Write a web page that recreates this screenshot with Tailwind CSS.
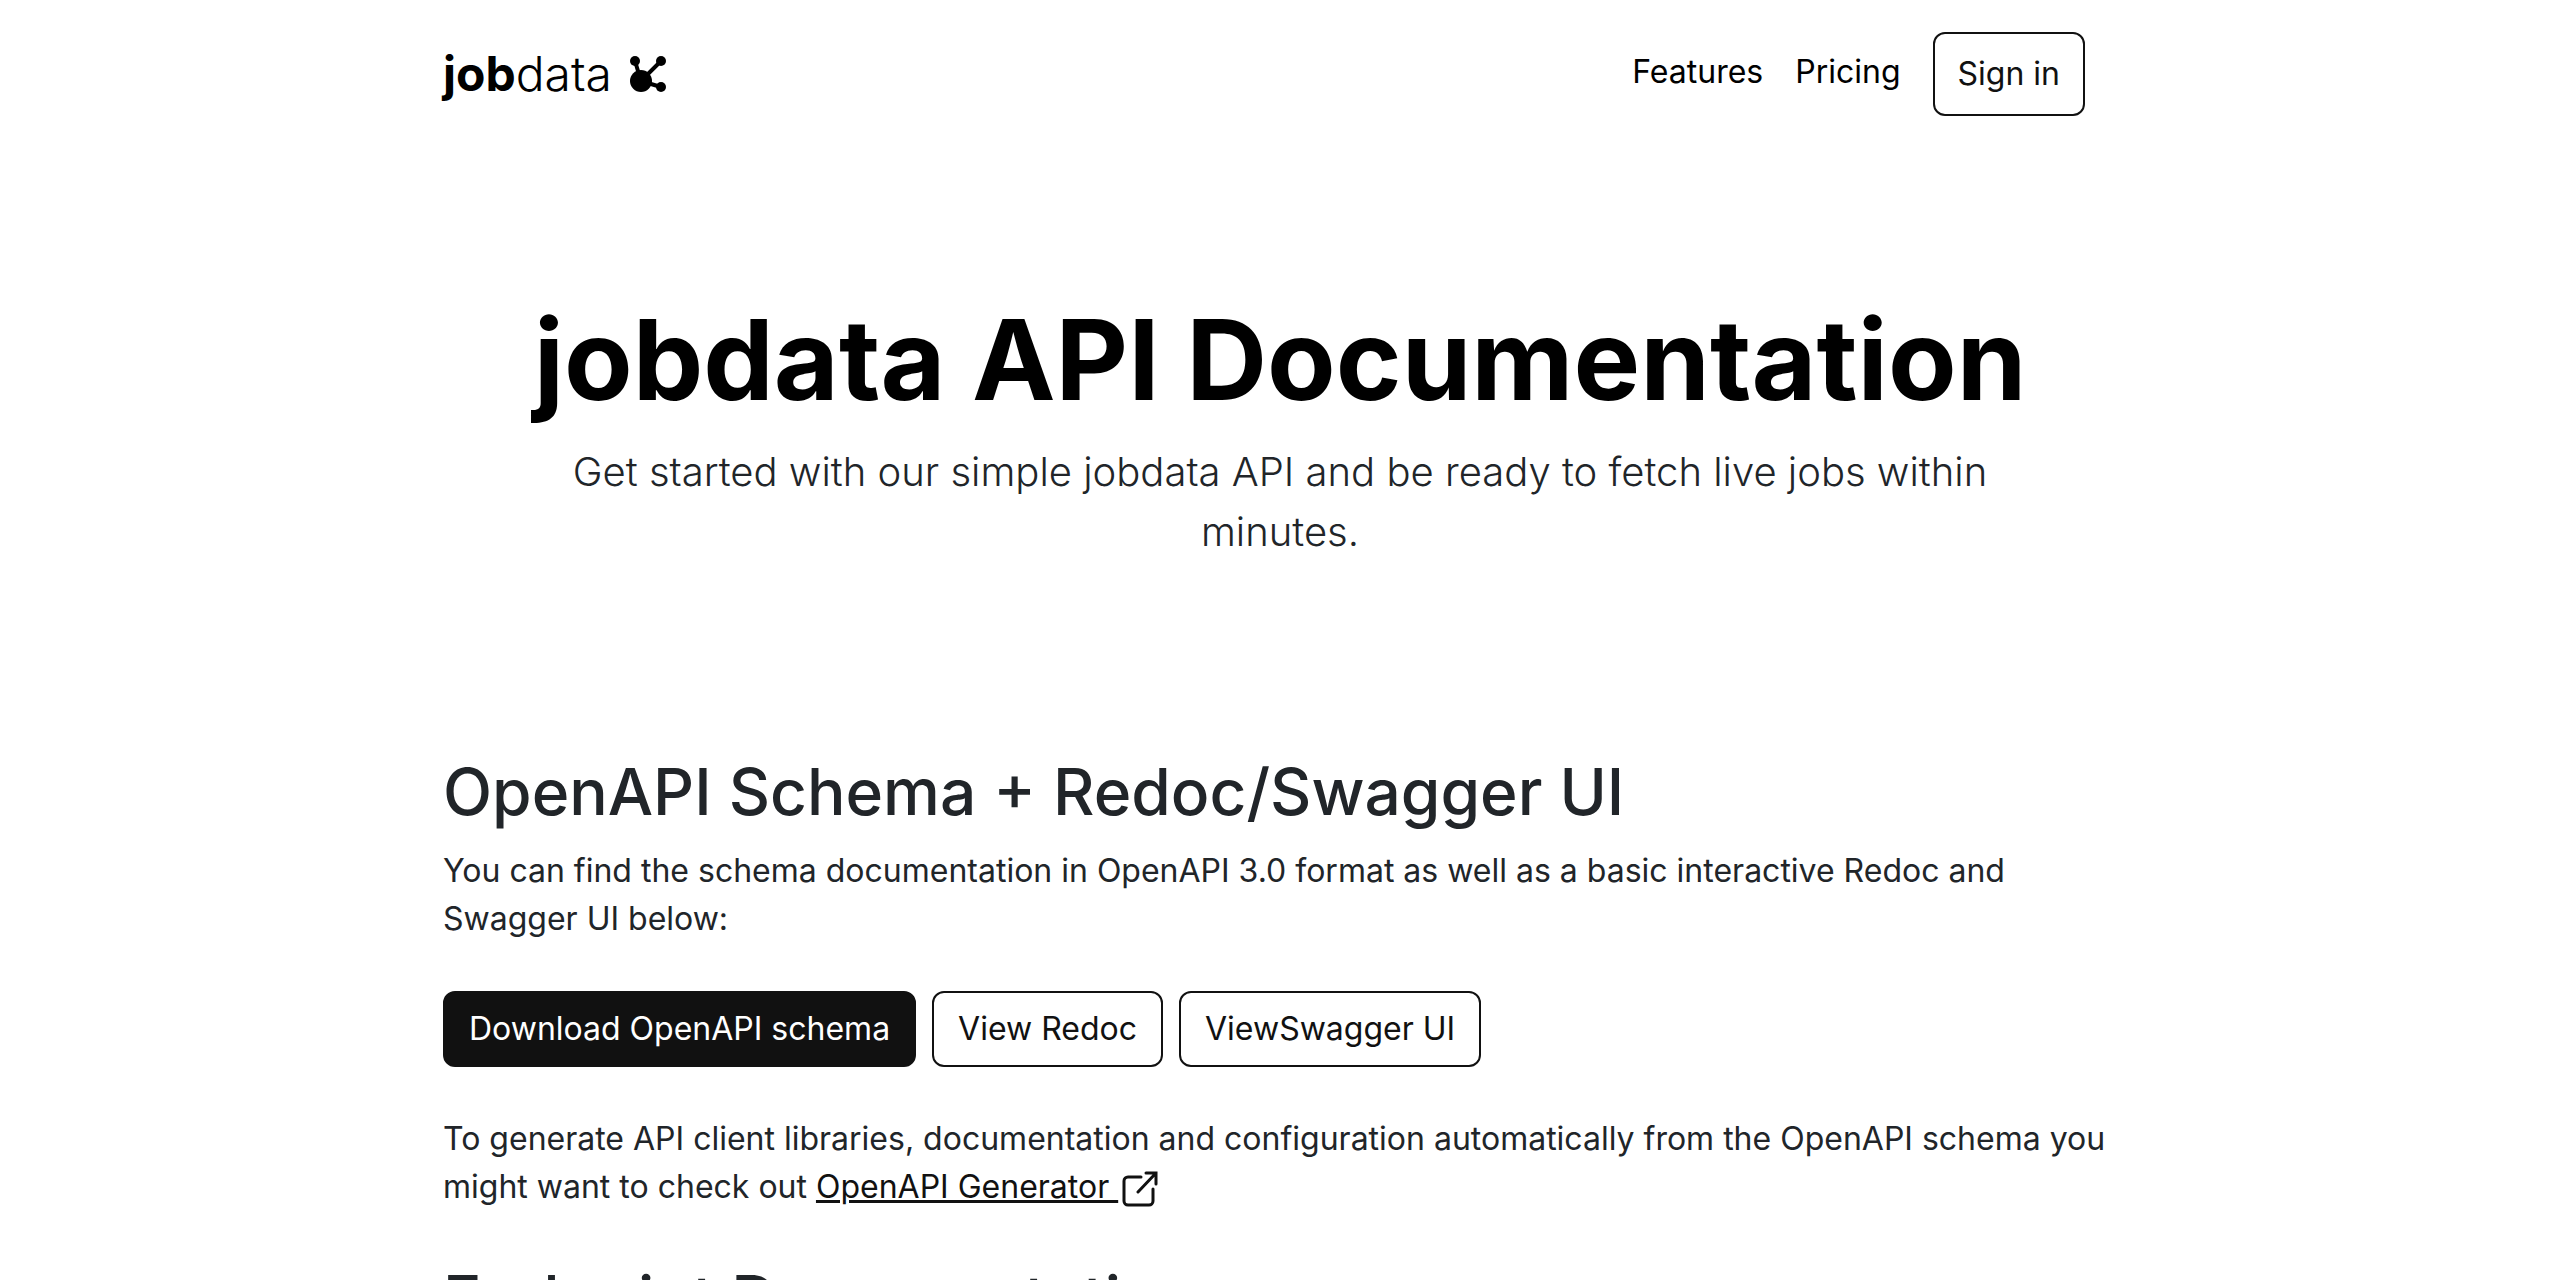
<!DOCTYPE html>
<html lang="en">
<head>
<meta charset="utf-8">
<meta name="viewport" content="width=device-width, initial-scale=1">
<title>jobdata API Documentation</title>
<script src="https://cdn.jsdelivr.net/npm/@tailwindcss/browser@4"></script>
</head>
<body class="bg-white font-['Inter',sans-serif] text-[32px] leading-[48px] font-normal text-[#212529]">
<div class="mx-auto max-w-[1674px]">
  <header class="flex items-center justify-between pt-8 pr-8">
    <a href="#" class="flex items-center gap-[18px] text-5xl leading-none text-black">
      <span><b class="font-bold">job</b><span class="font-light">data</span></span>
      <svg class="size-9" viewBox="0 0 36 36" fill="currentColor" aria-hidden="true">
        <path d="M5 5l6 20L31 5M11 25l20 6" fill="none" stroke="currentColor" stroke-width="4"/>
        <circle cx="11" cy="25" r="11"/><circle cx="5" cy="5" r="5"/><circle cx="31" cy="5" r="5"/><circle cx="31" cy="31" r="5"/>
      </svg>
    </a>
    <nav class="flex items-center gap-8 text-black">
      <a href="#" class="pb-1">Features</a>
      <a href="#" class="pb-1">Pricing</a>
      <button type="button" class="rounded-xl border-2 border-[#111] px-[23px] py-4 text-[#111]">Sign in</button>
    </nav>
  </header>
  <section class="pt-44 text-center">
    <h1 class="text-[112px] leading-[134px] font-bold text-black">jobdata API Documentation</h1>
    <p class="mx-auto max-w-[1500px] pt-4 text-[40px] leading-[60px] font-light">Get started with our simple jobdata API and be ready to fetch live jobs within minutes.</p>
  </section>
  <main class="pt-48 pb-12">
    <h2 class="text-[64px] leading-[76px] font-medium">OpenAPI Schema + Redoc/Swagger UI</h2>
    <p class="pt-[17px]">You can find the schema documentation in OpenAPI 3.0 format as well as a basic interactive Redoc and Swagger UI below:</p>
    <div class="flex flex-wrap gap-4 py-12 text-[#111]">
      <a href="#" class="rounded-xl border-2 border-[#111] bg-[#111] px-6 py-3 text-white">Download OpenAPI schema</a>
      <a href="#" class="rounded-xl border-2 border-[#111] px-6 py-3">View Redoc</a>
      <a href="#" class="rounded-xl border-2 border-[#111] px-6 py-3">ViewSwagger UI</a>
    </div>
    <p>To generate API client libraries, documentation and configuration automatically from the OpenAPI schema you might want to check out <a href="#" class="text-[#111]"><span class="whitespace-pre underline decoration-3">OpenAPI Generator </span><svg class="ml-1 inline size-9 align-[-9px]" viewBox="0 0 36 36" fill="none" stroke="currentColor" stroke-width="3" stroke-linecap="round" stroke-linejoin="round" aria-hidden="true"><path d="M19 6H6a4 4 0 0 0-4 4v20a4 4 0 0 0 4 4h21a4 4 0 0 0 4-4V18"/><path d="M16 21L34 2M24 2H34V13" stroke-linejoin="miter"/></svg></a></p>
    <h2 class="pt-[50px] text-[64px] leading-[76px] font-medium">Endpoint Documentation</h2>
  </main>
</div>
</body>
</html>
